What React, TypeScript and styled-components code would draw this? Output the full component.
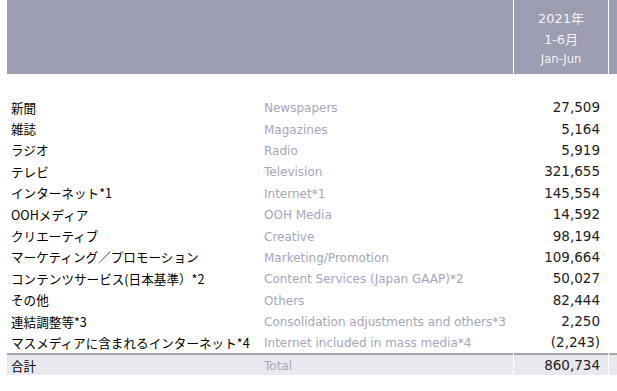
import React from 'react';
import styled, { createGlobalStyle } from 'styled-components';

type Row = { ja: string; en: string; value: string };

const rows: Row[] = [
  { ja: '新聞', en: 'Newspapers', value: '27,509' },
  { ja: '雑誌', en: 'Magazines', value: '5,164' },
  { ja: 'ラジオ', en: 'Radio', value: '5,919' },
  { ja: 'テレビ', en: 'Television', value: '321,655' },
  { ja: 'インターネット*1', en: 'Internet*1', value: '145,554' },
  { ja: 'OOHメディア', en: 'OOH Media', value: '14,592' },
  { ja: 'クリエーティブ', en: 'Creative', value: '98,194' },
  { ja: 'マーケティング／プロモーション', en: 'Marketing/Promotion', value: '109,664' },
  { ja: 'コンテンツサービス(日本基準）*2', en: 'Content Services (Japan GAAP)*2', value: '50,027' },
  { ja: 'その他', en: 'Others', value: '82,444' },
  { ja: '連結調整等*3', en: 'Consolidation adjustments and others*3', value: '2,250' },
  { ja: 'マスメディアに含まれるインターネット*4', en: 'Internet included in mass media*4', value: '(2,243)' },
];

function App() {
  return (
    <>
      <GlobalStyle />
      <Page>
        <Table>
          <HeadCell />
          <HeadCell>
            <HeadLine>2021年</HeadLine>
            <HeadLine>1-6月</HeadLine>
            <HeadSub>Jan-Jun</HeadSub>
          </HeadCell>
          <HeadCell />

          <Spacer />

          {rows.map((r) => (
            <React.Fragment key={r.en}>
              <LabelCell>
                <Ja>{r.ja}</Ja>
                <En>{r.en}</En>
              </LabelCell>
              <ValueCell>{r.value}</ValueCell>
              <EmptyCell />
            </React.Fragment>
          ))}

          <LabelCell $total>
            <Ja>合計</Ja>
            <En>Total</En>
          </LabelCell>
          <ValueCell $total>860,734</ValueCell>
          <EmptyCell $total />
        </Table>
      </Page>
    </>
  );
}

export default App;

const GlobalStyle = createGlobalStyle`
  html, body {
    margin: 0;
    padding: 0;
    background: #ffffff;
  }
  body {
    font-family: "Noto Sans CJK JP", "Noto Sans", sans-serif;
    overflow: hidden;
  }
`;

const Page = styled.div`
  width: 617px;
  height: 391px;
  padding-left: 7px;
  box-sizing: border-box;
  overflow: hidden;
`;

const Table = styled.div`
  display: grid;
  grid-template-columns: 506px 94px 40px;
  grid-template-rows: 74px 22px repeat(12, 21.4px) 22px;
  column-gap: 1px;
`;

const HeadCell = styled.div`
  background: #9c9db0;
  display: flex;
  flex-direction: column;
  align-items: center;
  padding-top: 8px;
  box-sizing: border-box;
  color: #f4f4f8;
`;

const HeadLine = styled.div`
  font-family: "DejaVu Sans", "Noto Sans CJK JP", sans-serif;
  font-size: 13px;
  line-height: 21px;
`;

const HeadSub = styled.div`
  font-family: "DejaVu Sans", sans-serif;
  font-size: 11.5px;
  line-height: 19px;
`;

const Spacer = styled.div`
  grid-column: 1 / -1;
`;

const LabelCell = styled.div<{ $total?: boolean }>`
  display: flex;
  align-items: center;
  padding-left: 4px;
  padding-top: 1px;
  background: ${(p) => (p.$total ? '#e8e8ee' : 'transparent')};
  border-top: ${(p) => (p.$total ? '2px solid #a4a4b4' : 'none')};
`;

const Ja = styled.span`
  width: 253px;
  flex-shrink: 0;
  font-family: "Noto Sans CJK JP", sans-serif;
  font-size: 12.6px;
  color: #000000;
  white-space: nowrap;
`;

const En = styled.span`
  font-family: "DejaVu Sans", sans-serif;
  font-size: 12px;
  color: #a6a6ba;
  white-space: nowrap;
  padding-top: 2px;
`;

const ValueCell = styled.div<{ $total?: boolean }>`
  display: flex;
  align-items: center;
  justify-content: flex-end;
  padding-right: 8px;
  padding-top: 1px;
  font-family: "DejaVu Sans", sans-serif;
  font-size: 13.5px;
  color: #1c1c1c;
  background: ${(p) => (p.$total ? '#e8e8ee' : 'transparent')};
  border-top: ${(p) => (p.$total ? '2px solid #a4a4b4' : 'none')};
`;

const EmptyCell = styled.div<{ $total?: boolean }>`
  background: ${(p) => (p.$total ? '#e8e8ee' : 'transparent')};
  border-top: ${(p) => (p.$total ? '2px solid #a4a4b4' : 'none')};
`;
